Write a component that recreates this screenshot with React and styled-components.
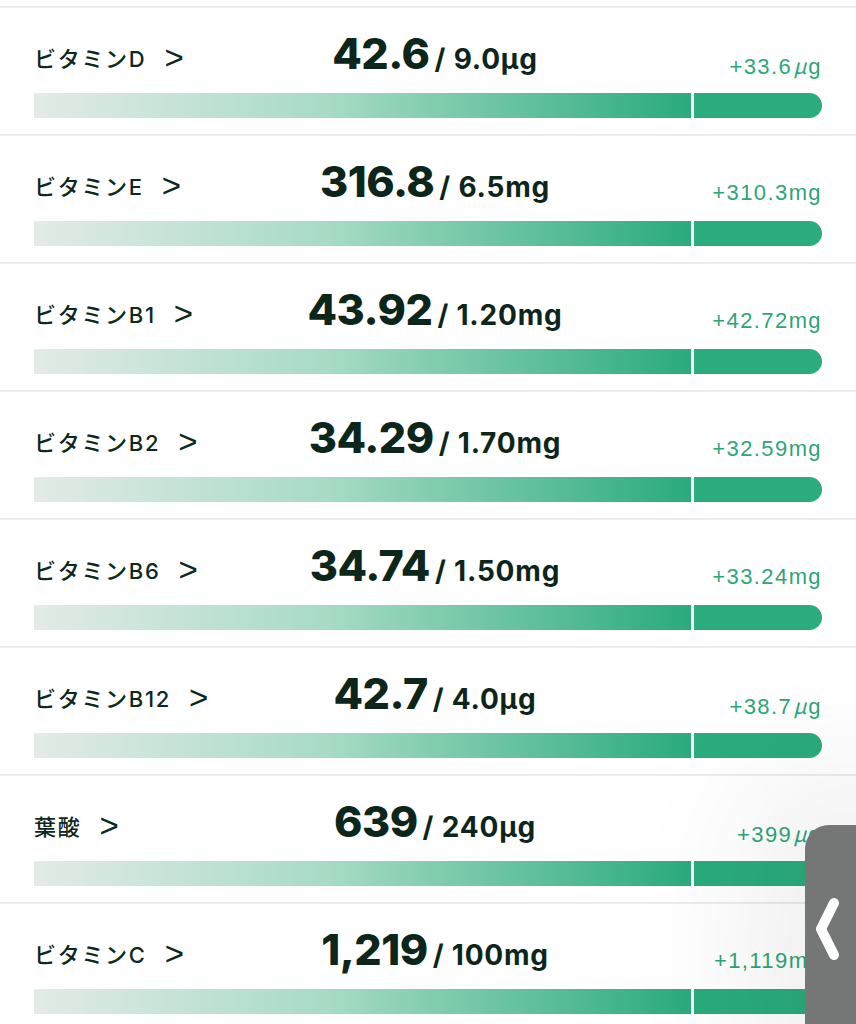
import React from 'react'
import styled, { createGlobalStyle } from 'styled-components'

const nutrients = [
  { name: 'ビタミンD', value: '42.6', target: '9.0µg', over: '+33.6', unit: 'μg' },
  { name: 'ビタミンE', value: '316.8', target: '6.5mg', over: '+310.3', unit: 'mg' },
  { name: 'ビタミンB1', value: '43.92', target: '1.20mg', over: '+42.72', unit: 'mg' },
  { name: 'ビタミンB2', value: '34.29', target: '1.70mg', over: '+32.59', unit: 'mg' },
  { name: 'ビタミンB6', value: '34.74', target: '1.50mg', over: '+33.24', unit: 'mg' },
  { name: 'ビタミンB12', value: '42.7', target: '4.0µg', over: '+38.7', unit: 'μg' },
  { name: '葉酸', value: '639', target: '240µg', over: '+399', unit: 'μg' },
  { name: 'ビタミンC', value: '1,219', target: '100mg', over: '+1,119', unit: 'mg' },
]

const App = () => {
  return (
    <Page>
      <GlobalStyle />
      <List>
        {nutrients.map((n) => (
          <Row key={n.name}>
            <Header>
              <Label>
                {n.name}
                <Arrow>&gt;</Arrow>
              </Label>
              <Amount>
                <Value>{n.value}</Value>
                <Target>/ {n.target}</Target>
              </Amount>
              <Over>
                {n.over}
                {n.unit === 'μg' ? (
                  <>
                    <Micro>μ</Micro>g
                  </>
                ) : (
                  n.unit
                )}
              </Over>
            </Header>
            <Bar>
              <Fill />
              <Extra />
            </Bar>
          </Row>
        ))}
      </List>
      <SideTab>
        <svg width="26" height="64" viewBox="0 0 26 64">
          <polyline
            points="20,6 7,32 20,58"
            fill="none"
            stroke="#fff"
            strokeWidth="10"
            strokeLinecap="round"
            strokeLinejoin="round"
          />
        </svg>
      </SideTab>
    </Page>
  )
}

export default App

const GlobalStyle = createGlobalStyle`
  html, body {
    margin: 0;
    padding: 0;
    background: #fff;
  }
  body {
    font-family: Inter, "Noto Sans CJK JP", sans-serif;
    overflow: hidden;
  }
`

const Page = styled.div`
  position: relative;
  width: 856px;
  height: 1024px;
  overflow: hidden;
  background: #fff;
`

const List = styled.div`
  padding-top: 6px;
`

const Row = styled.div`
  box-sizing: border-box;
  height: 128px;
  border-top: 2px solid #ececec;
  padding: 0 34px 16px;
`

const Header = styled.div`
  height: 85px;
  display: grid;
  grid-template-columns: 1fr auto 1fr;
`

const Label = styled.div`
  align-self: start;
  margin-top: 37px;
  font-family: Inter, "Noto Sans CJK JP", sans-serif;
  font-size: 22px;
  font-weight: 500;
  line-height: 26px;
  color: #0d281d;
  letter-spacing: 1.7px;
  white-space: nowrap;
`

const Arrow = styled.span`
  margin-left: 18px;
  font-family: "Liberation Sans", sans-serif;
  font-size: 33px;
  font-weight: 400;
  line-height: 26px;
  vertical-align: -2px;
`

const Amount = styled.div`
  align-self: start;
  margin-top: 19px;
  padding-left: 14px;
  display: flex;
  align-items: baseline;
  gap: 5px;
  color: #0c261b;
  white-space: nowrap;
`

const Value = styled.span`
  font-family: Inter, sans-serif;
  font-size: 43px;
  font-weight: 800;
  line-height: 52px;
  letter-spacing: -0.5px;
`

const Target = styled.span`
  font-family: Inter, sans-serif;
  font-size: 28px;
  font-weight: 700;
  letter-spacing: 0.8px;
`

const Over = styled.div`
  align-self: start;
  justify-self: end;
  margin-top: 43px;
  font-family: "Liberation Sans", sans-serif;
  font-size: 22px;
  line-height: 28px;
  letter-spacing: 1.4px;
  color: #2ea577;
  white-space: nowrap;
`

const Micro = styled.span`
  padding: 0 2px 0 1px;
  font-family: "Noto Sans CJK JP", sans-serif;
  font-size: 21px;
  font-style: italic;
  letter-spacing: 0;
`

const Bar = styled.div`
  display: flex;
  height: 25px;
  gap: 3px;
`

const Fill = styled.div`
  flex: 1;
  background: linear-gradient(90deg, #e3ebe7 0%, #a6dbc4 45%, #2aab7b 100%);
`

const Extra = styled.div`
  width: 128px;
  background: #2aac7c;
  border-radius: 0 13px 13px 0;
`

const SideTab = styled.div`
  position: absolute;
  left: 805px;
  top: 825px;
  width: 80px;
  height: 240px;
  background: #757776;
  border-radius: 24px 0 0 0;
  box-shadow: 0 0 140px 50px rgba(0, 0, 0, 0.07);
  display: flex;
  align-items: flex-start;
  padding-top: 72px;
  padding-left: 9px;
  box-sizing: border-box;
`
